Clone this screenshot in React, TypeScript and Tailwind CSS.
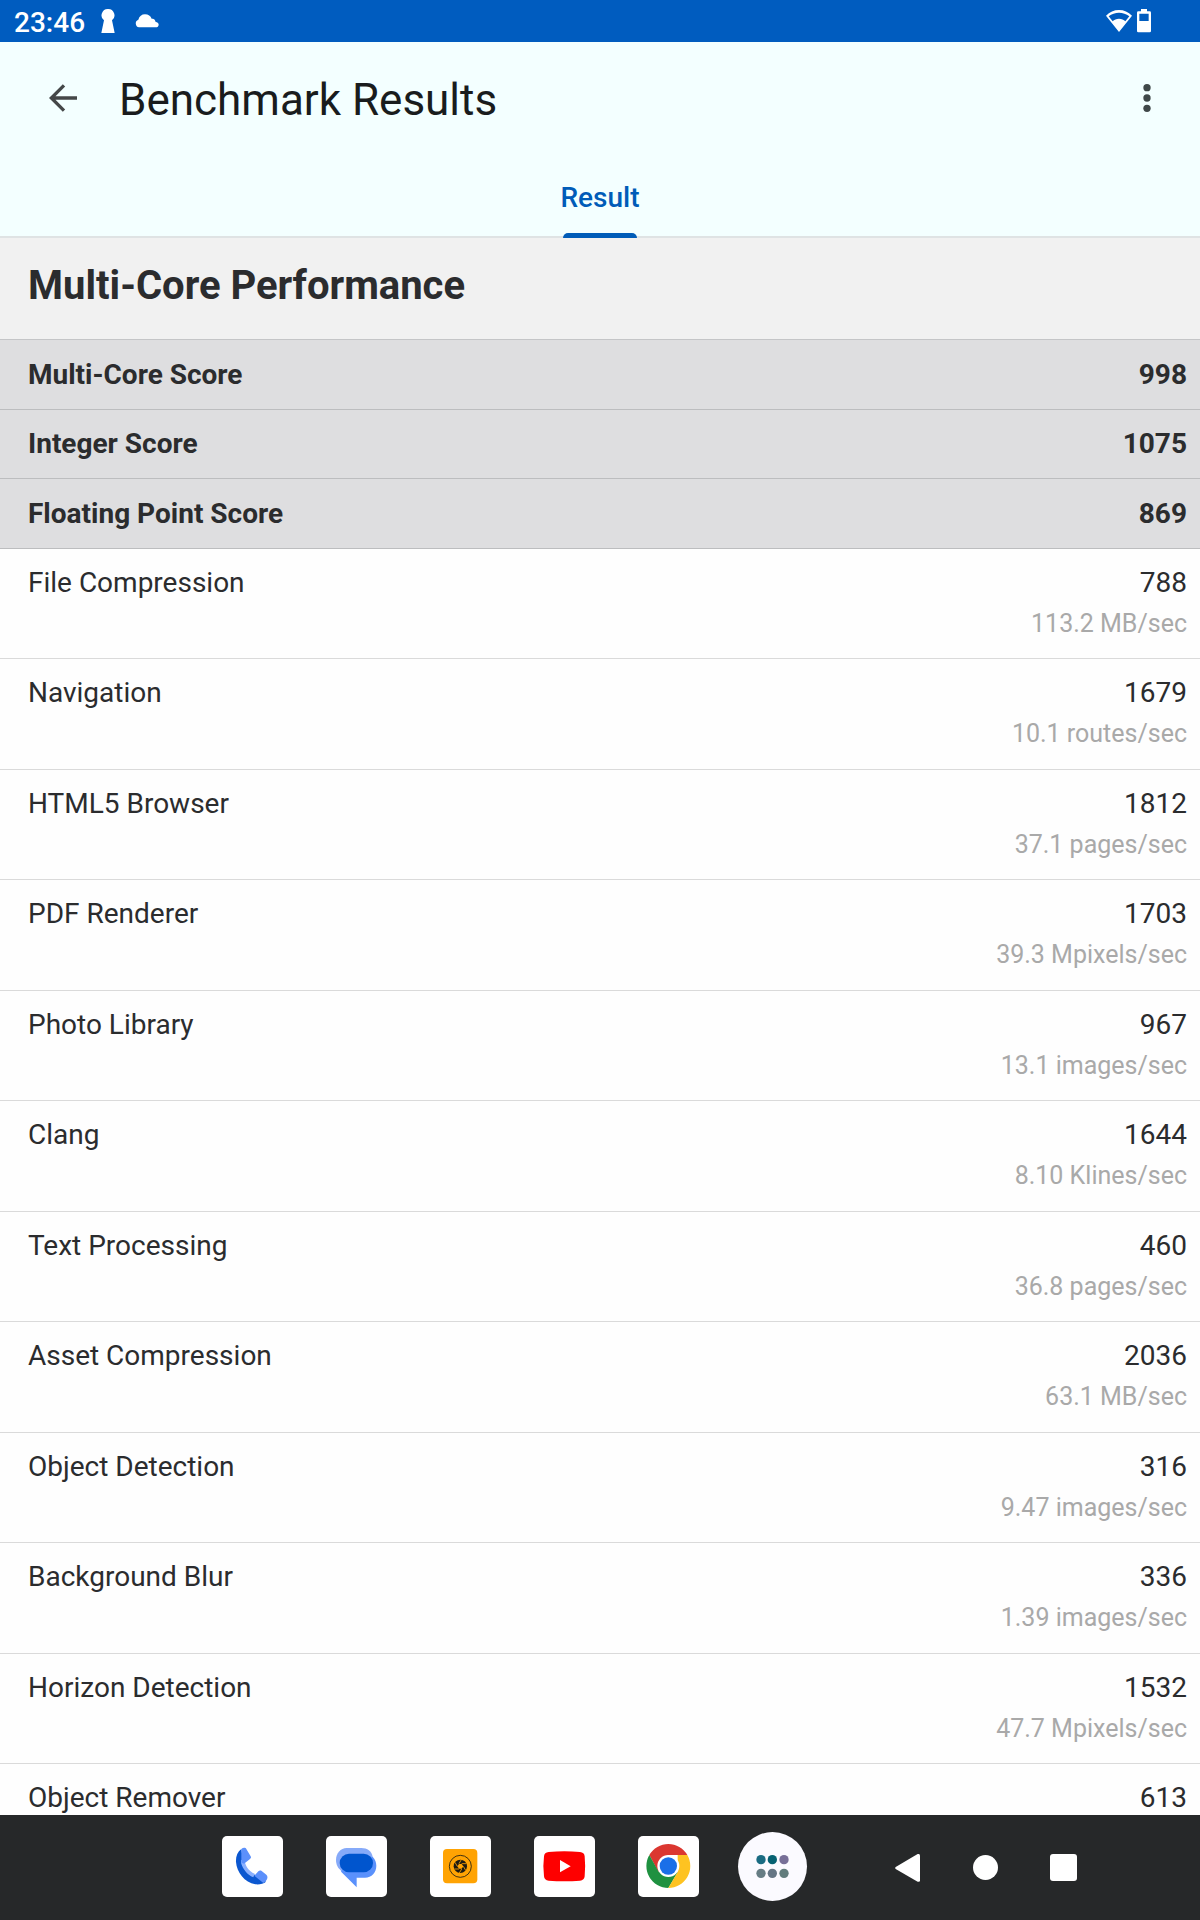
import React from "react";

const scores = [
  { name: "Multi-Core Score", value: "998" },
  { name: "Integer Score", value: "1075" },
  { name: "Floating Point Score", value: "869" },
];

const workloads = [
  { name: "File Compression", value: "788", rate: "113.2 MB/sec" },
  { name: "Navigation", value: "1679", rate: "10.1 routes/sec" },
  { name: "HTML5 Browser", value: "1812", rate: "37.1 pages/sec" },
  { name: "PDF Renderer", value: "1703", rate: "39.3 Mpixels/sec" },
  { name: "Photo Library", value: "967", rate: "13.1 images/sec" },
  { name: "Clang", value: "1644", rate: "8.10 Klines/sec" },
  { name: "Text Processing", value: "460", rate: "36.8 pages/sec" },
  { name: "Asset Compression", value: "2036", rate: "63.1 MB/sec" },
  { name: "Object Detection", value: "316", rate: "9.47 images/sec" },
  { name: "Background Blur", value: "336", rate: "1.39 images/sec" },
  { name: "Horizon Detection", value: "1532", rate: "47.7 Mpixels/sec" },
  { name: "Object Remover", value: "613" },
];

const StatusBar = () => (
  <div className="flex h-[42px] shrink-0 items-center justify-between bg-[#005cbf] pl-3.5 pr-[49px] text-white">
    <div className="flex items-center">
      <span className="pt-[3px] text-[28px] leading-[39px] font-medium">23:46</span>
      <svg className="ml-[15px] h-6 w-4" viewBox="0 0 48 72" fill="currentColor">
        <path d="M24 0a19 19 0 0 1 12 34L44 72H4l8-38A19 19 0 0 1 24 0z" />
      </svg>
      <svg className="ml-[19px] h-3.5 w-6" viewBox="0 0 72 42" fill="currentColor">
        <path d="M12 40A12 12 0 0 1 10 17C13 7 20 1 30 1c10 0 17 5 20 13 3 0 5 0 7 2 3 2 4 5 5 8 6 1 9 4 9 8 0 5-4 8-9 8z" />
      </svg>
    </div>
    <div className="flex items-center gap-[5px]">
      <svg className="h-[22px] w-[26px]" viewBox="0 0 78 66" fill="currentColor">
        <path
          fillRule="evenodd"
          d="M39 66L0 17C11 6 24 0 39 0s28 6 39 17zM20 34c5-5 11-8 19-8s14 3 19 8L70 19C61 12 50 8 39 8S17 12 8 19z"
        />
      </svg>
      <svg className="h-6 w-3.5" viewBox="0 0 42 72" fill="currentColor">
        <path fillRule="evenodd" d="M12 0h18v7h8q4 0 4 4v55q0 4-4 4H4q-4 0-4-4V11q0-4 4-4h8zM7 14v22h28V14z" />
      </svg>
    </div>
  </div>
);

const AppHeader = () => (
  <header className="shrink-0 border-b-2 border-[#dfe3e4] bg-[#f3ffff]">
    <div className="flex h-28 items-center pl-[42px] pr-[39px]">
      <button type="button" aria-label="Back" className="flex size-[42px] items-center justify-center text-[#444748]">
        <svg className="size-7" viewBox="0 0 84 84" fill="none" stroke="currentColor" strokeWidth="10">
          <path d="M84 42H8M45 4L7 42l38 38" />
        </svg>
      </button>
      <h1 className="ml-[35px] flex-1 pt-1 text-[44px] leading-[56px] text-[#191c1d]">Benchmark Results</h1>
      <button type="button" aria-label="More options" className="flex h-[42px] w-7 items-center justify-center text-[#3f4849]">
        <svg className="h-7 w-2" viewBox="0 0 24 84" fill="currentColor">
          <circle cx="12" cy="11" r="11" />
          <circle cx="12" cy="42" r="11" />
          <circle cx="12" cy="73" r="11" />
        </svg>
      </button>
    </div>
    <div role="tablist" className="flex h-[82px] justify-center">
      <button
        type="button"
        role="tab"
        aria-selected="true"
        className="relative px-6 pt-1.5 text-[28px] leading-8 font-medium text-[#005cb8]"
      >
        Result
        <span className="absolute inset-x-0 -bottom-0.5 mx-auto h-[5px] w-[74px] rounded-t-[5px] bg-[#005cb8]" />
      </button>
    </div>
  </header>
);

const Results = () => (
  <main className="min-h-0 flex-1 overflow-y-auto bg-[#fefefe] text-[#2b2c2e] [scrollbar-width:none]">
    <h2 className="h-[102px] border-b border-[#c4c5c7] bg-[#f1f1f1] px-7 pt-6 text-[40px] leading-[48px] font-bold">
      Multi-Core Performance
    </h2>
    <table className="w-full border-separate border-spacing-0 text-[28px] leading-10">
      <tbody className="bg-[#dedee0] font-bold">
        {scores.map((score) => (
          <tr key={score.name} className="h-[70px] even:h-[69px]">
            <th scope="row" className="border-b border-[#bcbdbf] pl-7 text-left font-bold">
              {score.name}
            </th>
            <td className="border-b border-[#bcbdbf] pr-[13px] text-right">{score.value}</td>
          </tr>
        ))}
      </tbody>
      <tbody>
        {workloads.map((item) => (
          <tr key={item.name} className="h-[110px] align-top even:h-[111px]">
            <th scope="row" className="border-b border-[#dadada] pt-3.5 pl-7 text-left font-normal">
              {item.name}
            </th>
            <td className="border-b border-[#dadada] pt-3.5 pr-[13px] text-right">
              {item.value}
              {item.rate && <div className="text-[25px] leading-[42px] text-[#a9a9a9]">{item.rate}</div>}
            </td>
          </tr>
        ))}
      </tbody>
    </table>
  </main>
);

const PhoneIcon = () => (
  <svg className="size-full" viewBox="0 0 183 183">
    <path
      fill="#0b57d0"
      d="M58 39C46 48 41 62 42 78c2 30 26 62 58 67 13 1 24-1 32-8L99 116C83 113 68 98 64 80z"
    />
    <path fill="#8ab0ff" d="M57 73l10-4c2 20 13 37 31 44l-4 11C75 116 62 98 57 80z" />
    <path fill="#5c90fb" d="M58 39c5-4 12-5 15 0l13 22c2 3 1 6-2 8L66 83l-8-3z" />
    <path fill="#5c90fb" d="M97 119l12-13c3-3 7-3 10-1l14 11c5 5 4 12 0 17-3 4-6 6-9 8z" />
  </svg>
);

const MessagesIcon = () => (
  <svg className="size-full" viewBox="0 0 183 183">
    <path fill="#5a91fc" d="M65 53h52c19 0 34 16 34 36s-14 36-34 36H92v29L46 108C38 84 42 62 65 53z" />
    <path fill="#86aaf9" d="M62 36h44c18 0 31 9 34 26L46 104C36 98 30 86 30 72c0-21 14-36 32-36z" />
    <rect x="41" y="53" width="100" height="56" rx="28" fill="#0055ce" />
  </svg>
);

const CameraIcon = () => (
  <svg className="size-full" viewBox="0 0 183 183">
    <rect x="39" y="39" width="103" height="103" rx="12" fill="#ffa303" />
    <circle cx="91" cy="91" r="33" fill="none" stroke="#1c1a12" strokeWidth="2.5" />
    <circle cx="91" cy="91" r="20" fill="#1c1a12" />
    <path
      stroke="#ffa303"
      strokeWidth="2.5"
      d="M87 83L94 71M95 83l14 0M100 91l7 12M95 99l-7 12M87 99l-14 0M82 91l-7-12"
    />
    <path fill="#ffa303" d="M87 84h8l5 7-5 7h-8l-5-7z" />
  </svg>
);

const YoutubeIcon = () => (
  <svg className="size-full" viewBox="0 0 183 183">
    <path
      fill="#fe0000"
      d="M44 48q47-4 94 0 13 1 14 13 3 30 0 60-1 12-14 13-47 3-94 0-13-1-14-13-4-30 0-60 1-12 14-13z"
    />
    <path fill="#fff" d="M78 72l32 19-32 18z" />
  </svg>
);

const ChromeIcon = () => (
  <svg className="size-full" viewBox="0 0 183 183">
    <path fill="#db3730" d="M34 57a66 66 0 0 1 114 0H90l-29 51z" />
    <path fill="#1f9140" d="M34 57a66 66 0 0 0 57 99l29-49-58 0z" />
    <path fill="#fec321" d="M148 57a66 66 0 0 1-57 99l28-48V57z" />
    <circle cx="91" cy="90" r="33" fill="#fff" />
    <circle cx="91" cy="90" r="26" fill="#1a6fe8" />
  </svg>
);

const apps = [
  { name: "Phone", icon: <PhoneIcon /> },
  { name: "Messages", icon: <MessagesIcon /> },
  { name: "Camera", icon: <CameraIcon /> },
  { name: "YouTube", icon: <YoutubeIcon /> },
  { name: "Chrome", icon: <ChromeIcon /> },
];

const Taskbar = () => (
  <nav className="flex h-[105px] shrink-0 items-center justify-end bg-[#262829] pr-[98px] pb-0.5 text-white">
    <div className="flex items-center">
      {apps.map((app) => (
        <div key={app.name} className="flex w-[104px] justify-center">
          <button type="button" aria-label={app.name} className="size-[61px] overflow-hidden rounded-[5px] bg-white">
            {app.icon}
          </button>
        </div>
      ))}
      <div className="flex w-[104px] justify-center">
        <button type="button" aria-label="All apps" className="size-[69px] rounded-full bg-[#fbfaff]">
          <svg className="size-full" viewBox="0 0 207 207">
            <circle cx="69" cy="83" r="14" fill="#1a6b82" />
            <circle cx="103" cy="83" r="14" fill="#066172" />
            <circle cx="138" cy="83" r="14" fill="#776f98" />
            <circle cx="69" cy="124" r="14" fill="#667c84" />
            <circle cx="103" cy="124" r="14" fill="#667685" />
            <circle cx="138" cy="124" r="14" fill="#627c7d" />
          </svg>
        </button>
      </div>
    </div>
    <div className="ml-11 flex items-center pt-0.5">
      <button type="button" aria-label="Back" className="flex w-[78px] justify-center">
        <svg className="h-7 w-[25px]" viewBox="0 0 75 84" fill="currentColor">
          <path d="M2 39L68 0q7-1 7 5v74q0 6-7 4L2 45q-3-3 0-6z" />
        </svg>
      </button>
      <button type="button" aria-label="Home" className="flex w-[78px] justify-center">
        <span className="size-[25px] rounded-full bg-white" />
      </button>
      <button type="button" aria-label="Recent apps" className="flex w-[78px] justify-center">
        <span className="size-[27px] rounded-[3px] bg-white" />
      </button>
    </div>
  </nav>
);

const App = () => {
  return (
    <div className="flex h-screen flex-col overflow-hidden font-['Roboto',sans-serif]">
      <StatusBar />
      <AppHeader />
      <Results />
      <Taskbar />
    </div>
  );
};

export default App;
